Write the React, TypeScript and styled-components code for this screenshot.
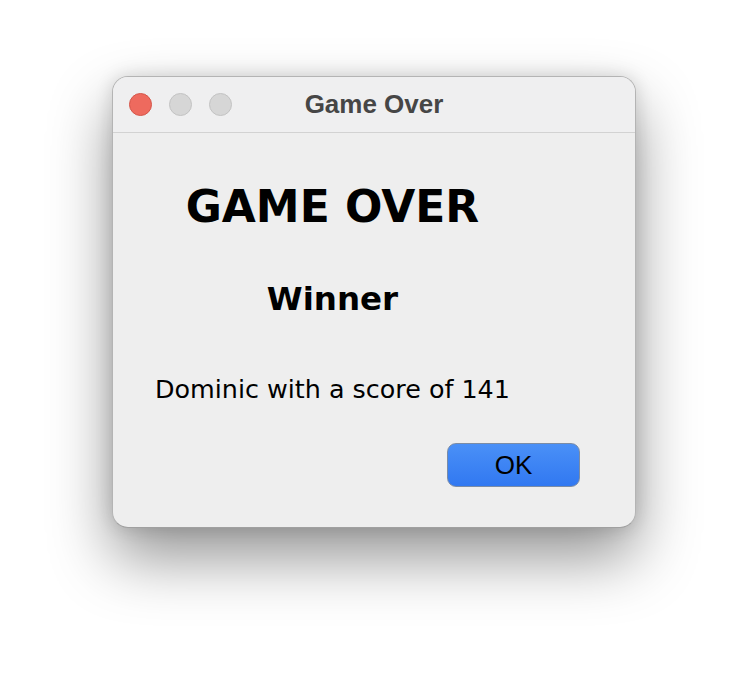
import React from "react";
import styled, { createGlobalStyle } from "styled-components";

const Global = createGlobalStyle`
  html, body { margin: 0; padding: 0; background: #ffffff; }
  body { width: 748px; height: 676px; overflow: hidden; }
`;

const Stage = styled.div`
  width: 748px;
  height: 676px;
  box-sizing: border-box;
  padding: 76px 0 0 112px;
`;

const Window = styled.div`
  width: 524px;
  height: 452px;
  box-sizing: border-box;
  border-radius: 16px;
  background: #eeeeee;
  border: 1px solid #b4b4b4;
  border-bottom-color: #a0a0a0;
  box-shadow: 0 30px 62px rgba(0, 0, 0, 0.42), 0 0 18px rgba(0, 0, 0, 0.14);
  overflow: hidden;
  display: flex;
  flex-direction: column;
`;

const TitleBar = styled.div`
  height: 56px;
  flex: none;
  box-sizing: border-box;
  border-bottom: 1px solid #d2d2d2;
  background: #efeff0;
  display: flex;
  align-items: center;
  padding-left: 16px;
  position: relative;
`;

const Light = styled.span<{ $c: string; $b: string }>`
  width: 23px;
  height: 23px;
  border-radius: 50%;
  box-sizing: border-box;
  background: ${(p) => p.$c};
  border: 1px solid ${(p) => p.$b};
  margin-right: 17px;
`;

const Title = styled.div`
  position: absolute;
  left: 0;
  right: 0;
  top: 0;
  bottom: 0;
  display: flex;
  align-items: center;
  justify-content: center;
  font-family: "Liberation Sans", Arial, sans-serif;
  font-weight: 700;
  font-size: 26px;
  color: #464646;
  pointer-events: none;
`;

const Body = styled.div`
  flex: 1;
  display: flex;
  flex-direction: column;
  padding: 0 55px 0 42px;
`;

const Panel = styled.div`
  align-self: flex-start;
  display: flex;
  flex-direction: column;
  align-items: center;
  font-family: "DejaVu Sans", "Lucida Grande", sans-serif;
  color: #000;
`;

const Heading = styled.div<{ $size: number; $h: number }>`
  font-size: ${(p) => p.$size}px;
  font-weight: 700;
  height: ${(p) => p.$h}px;
  line-height: ${(p) => p.$h}px;
  white-space: nowrap;
`;

const Message = styled.div`
  font-size: 25.4px;
  height: 40px;
  line-height: 40px;
  margin-top: 52px;
  white-space: nowrap;
`;

const ButtonRow = styled.div`
  display: flex;
  justify-content: flex-end;
  margin-top: 34px;
`;

const OkButton = styled.button`
  width: 133px;
  height: 44px;
  box-sizing: border-box;
  border-radius: 9px;
  border: 1.5px solid #7b8ca6;
  background: linear-gradient(#4a90f7, #3178f1);
  font-family: "Liberation Sans", Arial, sans-serif;
  font-size: 26px;
  color: #000;
  padding: 0;
`;

export default function App() {
  return (
    <>
      <Global />
      <Stage>
        <Window>
          <TitleBar>
            <Light $c="#ee6a5e" $b="#d5564a" />
            <Light $c="#d6d6d6" $b="#c3c3c3" />
            <Light $c="#d6d6d6" $b="#c3c3c3" />
            <Title>Game Over</Title>
          </TitleBar>
          <Body>
            <Panel>
              <Heading $size={44} $h={148}>GAME OVER</Heading>
              <Heading $size={32.5} $h={36}>Winner</Heading>
              <Message>Dominic with a score of 141</Message>
            </Panel>
            <ButtonRow>
              <OkButton>OK</OkButton>
            </ButtonRow>
          </Body>
        </Window>
      </Stage>
    </>
  );
}
